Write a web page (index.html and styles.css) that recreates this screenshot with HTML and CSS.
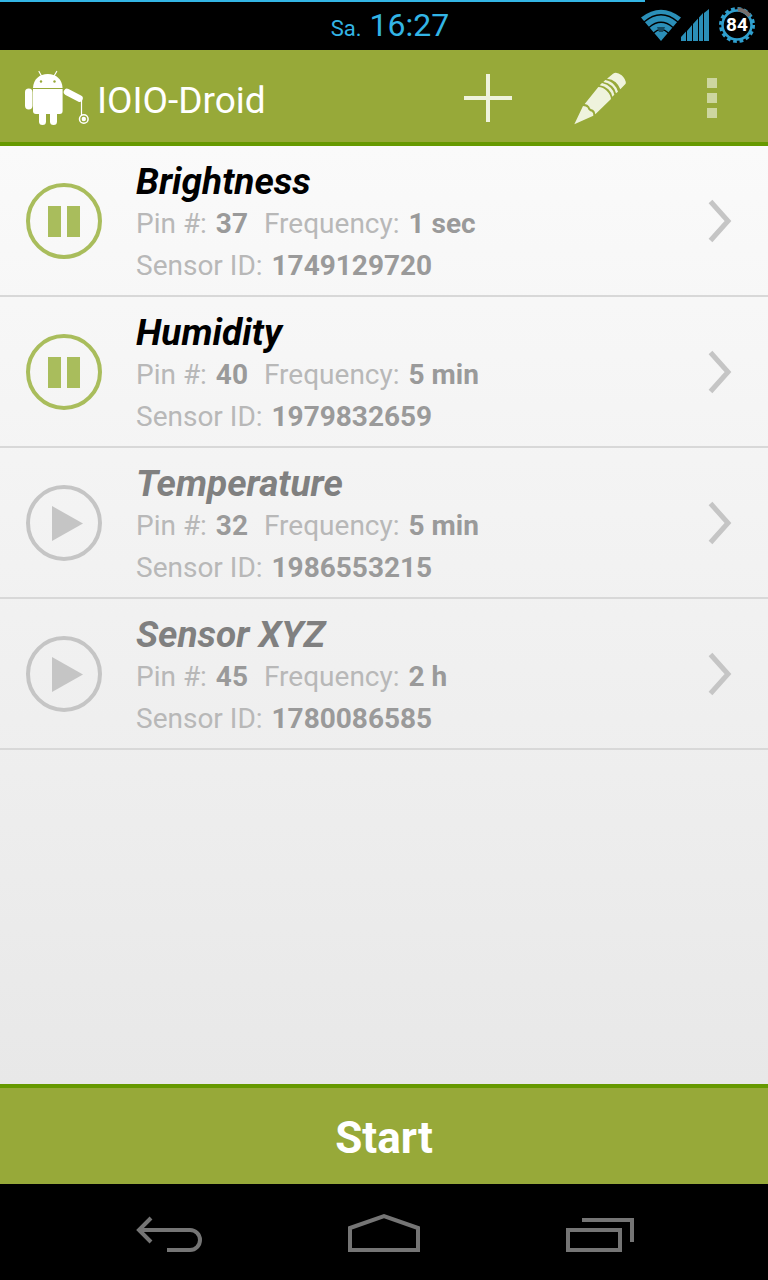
FILE: index.html
```html
<!DOCTYPE html>
<html lang="en">
<head>
	<meta charset="UTF-8" />
	<meta name="viewport" content="width=device-width, initial-scale=1.0" />
	<title>IOIO-Droid</title>
	<link rel="stylesheet" href="styles.css">
</head>
<body>

	<!-- shared icons -->
	<svg class="sprite" aria-hidden="true">
		<symbol id="pause" viewBox="0 0 80 80">
			<circle cx="40" cy="40" r="36" fill="none" stroke="currentColor" stroke-width="4"/>
			<path d="M24 25h13v31H24zM43 25h13v31H43z" fill="currentColor"/>
		</symbol>
		<symbol id="play" viewBox="0 0 80 80">
			<circle cx="40" cy="40" r="36" fill="none" stroke="currentColor" stroke-width="4"/>
			<path d="M28 23L59 40.500 28 58z" fill="currentColor"/>
		</symbol>
		<symbol id="chevron" viewBox="0 0 24 44">
			<path d="M2.500 2.500L20 22 2.500 41.500" fill="none" stroke="currentColor" stroke-width="5"/>
		</symbol>
	</svg>

	<div class="status">
		<div class="battery-line" style="width:84%"></div>
		<div class="clock"><span class="day">Sa.</span> 16:27</div>
		<div class="status-icons">
			<svg width="40" height="32" viewBox="0 0 40 32" aria-label="Wi-Fi">
				<path d="M0 8.500Q20-7 40 8.500L20 32z" fill="#2b8fb8"/>
				<path d="M3 13Q20-1.500 37 13M8 18.500Q20 8 32 18.500M12.500 24Q20 17 27.500 24" fill="none" stroke="#000" stroke-width="1.300"/>
				<path d="M16 18h8l-2 5h-4z" fill="#164a60"/>
			</svg>
			<svg width="28" height="32" viewBox="0 0 28 32" aria-label="Signal">
				<path d="M0 32v-4l5-5.500V32zM6 32V22l5-6v16zM12 32V15l5-5.500V32zM18 32V8.500l4-4.500V32zM23 32V4l5-4v32z" fill="#2b8fb8"/>
			</svg>
			<svg class="gear" width="36" height="36" viewBox="0 0 36 36" aria-label="Battery">
				<circle cx="18" cy="18" r="16.500" fill="none" stroke="#2f9fce" stroke-width="3" stroke-dasharray="3.700 2.780"/>
				<circle cx="18" cy="18" r="14.500" fill="none" stroke="#2f9fce" stroke-width="2.500"/>
				<path d="M19 2.500A15.500 15.500 0 0 1 30.500 9" fill="none" stroke="#776e6a" stroke-width="4"/>
				<text class="gear-text" x="18" y="24" text-anchor="middle">84</text>
			</svg>
		</div>
	</div>

	<header class="bar">
		<svg class="logo" width="66" height="56" viewBox="24 70 66 56" aria-hidden="true">
			<g fill="#fff">
				<path d="M33 88C33.500 79 39.500 74 47.800 74S62 79 62.600 88z"/>
				<path d="M33 89h29.600v22a3 3 0 0 1-3 3H36a3 3 0 0 1-3-3z"/>
				<rect x="25" y="88.500" width="7.500" height="21" rx="3.700"/>
				<rect x="39" y="108" width="7" height="17" rx="3.500"/>
				<rect x="50" y="108" width="7" height="17" rx="3.500"/>
			</g>
			<g fill="none" stroke="#fff" stroke-linecap="round">
				<path d="M67 92l12.500 6.500" stroke-width="6.500"/>
				<path d="M81.500 99v16M39 71.500l2.500 4.500M56.700 71.500L54 76" stroke-width="1.200"/>
				<circle cx="83.800" cy="119" r="4.300" stroke-width="1.500"/>
			</g>
			<circle cx="83.800" cy="119" r="2.200" fill="#fff"/>
			<circle cx="41" cy="81.500" r="1.200" fill="#97a939"/>
			<circle cx="54.500" cy="81.500" r="1.200" fill="#97a939"/>
		</svg>
		<h1 class="app-name">IOIO-Droid</h1>
		<button class="action" aria-label="Add">
			<svg width="48" height="48" viewBox="0 0 48 48"><path d="M24 0v48M0 24h48" stroke="#eff3dd" stroke-width="4"/></svg>
		</button>
		<button class="action" aria-label="Edit">
			<svg width="54" height="54" viewBox="399 61 162 162" fill="#eff3dd">
				<path d="M403 221L429 166Q438 166 443 171 445 180 456 183 461 188 460 195z"/>
				<path d="M434 160L475 109Q490 110 500 120 512 132 513 145L466 191Q465 181 459 177 449 175 448 168 443 160 434 160z"/>
				<path d="M479 104L486 97Q503 101 512 111 522 121 523 132L517 138Q515 126 505 116 493 105 479 104z"/>
				<path d="M490 94L496 88Q513 91 522 102 532 112 534 123L528 128Q526 115 516 106 504 95 490 94z"/>
				<path d="M501 84L519 69Q530 62 545 74 559 87 557 99L541 116Q536 103 527 95 516 85 501 84z"/>
			</svg>
		</button>
		<button class="action" aria-label="More options">
			<svg width="10" height="40" viewBox="0 0 10 40"><path d="M0 0h10v10H0zM0 15h10v10H0zM0 30h10v10H0z" fill="#cdd6a0"/></svg>
		</button>
	</header>

	<main class="content">
		<ul class="sensors">
			<li class="sensor running">
				<button class="toggle" aria-label="Pause Brightness"><svg width="80" height="80"><use href="#pause"/></svg></button>
				<div class="info">
					<h2 class="name">Brightness</h2>
					<div class="meta"><span>Pin #: <b>37</b></span><span>Frequency: <b>1 sec</b></span></div>
					<div class="meta"><span>Sensor ID: <b>1749129720</b></span></div>
				</div>
				<a class="open" href="#" aria-label="Open Brightness"><svg width="24" height="44"><use href="#chevron"/></svg></a>
			</li>
			<li class="sensor running">
				<button class="toggle" aria-label="Pause Humidity"><svg width="80" height="80"><use href="#pause"/></svg></button>
				<div class="info">
					<h2 class="name">Humidity</h2>
					<div class="meta"><span>Pin #: <b>40</b></span><span>Frequency: <b>5 min</b></span></div>
					<div class="meta"><span>Sensor ID: <b>1979832659</b></span></div>
				</div>
				<a class="open" href="#" aria-label="Open Humidity"><svg width="24" height="44"><use href="#chevron"/></svg></a>
			</li>
			<li class="sensor">
				<button class="toggle" aria-label="Start Temperature"><svg width="80" height="80"><use href="#play"/></svg></button>
				<div class="info">
					<h2 class="name">Temperature</h2>
					<div class="meta"><span>Pin #: <b>32</b></span><span>Frequency: <b>5 min</b></span></div>
					<div class="meta"><span>Sensor ID: <b>1986553215</b></span></div>
				</div>
				<a class="open" href="#" aria-label="Open Temperature"><svg width="24" height="44"><use href="#chevron"/></svg></a>
			</li>
			<li class="sensor">
				<button class="toggle" aria-label="Start Sensor XYZ"><svg width="80" height="80"><use href="#play"/></svg></button>
				<div class="info">
					<h2 class="name">Sensor XYZ</h2>
					<div class="meta"><span>Pin #: <b>45</b></span><span>Frequency: <b>2 h</b></span></div>
					<div class="meta"><span>Sensor ID: <b>1780086585</b></span></div>
				</div>
				<a class="open" href="#" aria-label="Open Sensor XYZ"><svg width="24" height="44"><use href="#chevron"/></svg></a>
			</li>
		</ul>
	</main>

	<button class="start">Start</button>

	<nav class="navbar">
		<button class="nav-btn" aria-label="Back">
			<svg width="72" height="40" viewBox="0 0 72 40"><path d="M7 17h51a10 10 0 0 1 0 20H35M19 5L7 17l12 12"/></svg>
		</button>
		<button class="nav-btn" aria-label="Home">
			<svg width="72" height="40" viewBox="0 0 72 40"><path d="M2 37V15L36 3l34 12v22z"/></svg>
		</button>
		<button class="nav-btn" aria-label="Recent apps">
			<svg width="72" height="40" viewBox="0 0 72 40"><path d="M4 17h52v20H4zM18 7h50v22"/></svg>
		</button>
	</nav>

</body>
</html>
```
FILE: styles.css
```css
* {
	box-sizing: border-box;
}

body {
	margin: 0;
	min-height: 100vh;
	display: flex;
	flex-direction: column;
	background: #000;
	font-family: Roboto, "Noto Sans", sans-serif;
}

button {
	padding: 0;
	border: 0;
	background: none;
	font-family: inherit;
	cursor: pointer;
}

svg {
	display: block;
}

.sprite {
	display: none;
}

/* status bar */
.status {
	position: relative;
	height: 50px;
	padding: 0 13px;
	display: grid;
	grid-template-columns: 1fr auto 1fr;
	align-items: center;
}

.battery-line {
	position: absolute;
	top: 0;
	left: 0;
	height: 2px;
	background: #33b5e5;
}

.clock {
	grid-column: 2;
	padding-left: 12px;
	font-size: 32px;
	color: #33b5e5;
}

.day {
	font-size: 22px;
}

.status-icons {
	display: flex;
	align-items: center;
	justify-content: flex-end;
}

.gear {
	margin-left: 10px;
}

.gear-text {
	font-size: 19px;
	font-weight: bold;
	fill: #fff;
}

/* action bar */
.bar {
	height: 96px;
	padding: 4px 0 0 24px;
	display: flex;
	align-items: center;
	background: #97a939;
	border-bottom: 4px solid #669900;
}

.app-name {
	flex: 1;
	margin: 0;
	padding: 4px 0 0 7px;
	font-size: 37px;
	font-weight: normal;
	color: #fff;
}

.action {
	width: 112px;
	height: 88px;
	display: flex;
	align-items: center;
	justify-content: center;
}

/* sensor list */
.content {
	flex: 1;
	background: linear-gradient(#fafafa, #e8e8e8);
}

.sensors {
	margin: 0;
	padding: 0;
	list-style: none;
}

.sensor {
	padding: 0 36px 0 24px;
	display: flex;
	align-items: center;
	border-bottom: 2px solid #d8d8d8;
	color: #c5c5c5;
}

.toggle {
	color: inherit;
}

.running .toggle {
	color: #a9bd5c;
}

.info {
	flex: 1;
	padding: 14px 0 8px 32px;
}

.name {
	margin: 0;
	font-size: 37px;
	line-height: 43px;
	font-style: italic;
	color: #808080;
}

.running .name {
	color: #000;
}

.meta {
	display: flex;
	gap: 16px;
	font-size: 28px;
	line-height: 42px;
	color: #b8b8b8;
}

.meta b {
	margin-left: 2px;
	color: #9a9a9a;
}

.open {
	color: inherit;
}

/* bottom */
.start {
	height: 100px;
	padding-top: 4px;
	background: #97a939;
	border-top: 4px solid #669900;
	font-size: 44px;
	font-weight: bold;
	color: #fff;
}

.navbar {
	height: 96px;
	padding-top: 2px;
	display: flex;
	justify-content: center;
}

.nav-btn {
	width: 216px;
	display: flex;
	align-items: center;
	justify-content: center;
}

.nav-btn path {
	fill: none;
	stroke: #757575;
	stroke-width: 4;
}
```
